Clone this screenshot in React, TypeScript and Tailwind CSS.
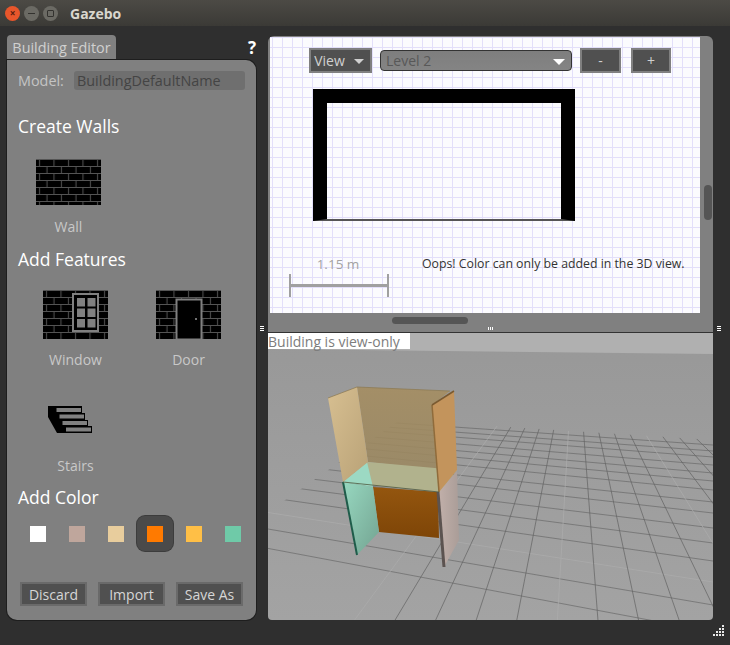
const font = "font-['Open_Sans','Noto_Sans',sans-serif]";

const swatches = ["#ffffff", "#bfa69c", "#e8cd9d", "#ff7a00", "#ffbf46", "#6fcaa8"];

function Bricks({ id, w, h }: { id: string; w: number; h: number }) {
  return (
    <>
      <defs>
        <pattern id={id} width="14.5" height="14" patternUnits="userSpaceOnUse">
          <rect width="14.5" height="14" fill="#000" />
          <path d="M0 .5H14.5M0 7.5H14.5M3.5 0V7M11 7V14" stroke="#777" strokeWidth="1" opacity=".7" />
        </pattern>
      </defs>
      <rect width={w} height={h} fill={`url(#${id})`} />
    </>
  );
}

function WallIcon() {
  return (
    <svg width="65" height="46" viewBox="0 0 65 46">
      <Bricks id="wall-b" w={65} h={46} />
    </svg>
  );
}

function WindowIcon() {
  return (
    <svg width="65" height="49" viewBox="0 0 65 49">
      <Bricks id="win-b" w={65} h={49} />
      <rect x="30" y="4" width="25" height="37" fill="#000" stroke="#808080" strokeWidth="2" />
      {[0, 1, 2].map((r) =>
        [0, 1].map((c) => (
          <rect key={`${r}${c}`} x={34 + c * 10.5} y={8 + r * 10.5} width="8" height="8.5" fill="#808080" />
        )),
      )}
    </svg>
  );
}

function DoorIcon() {
  return (
    <svg width="65" height="49" viewBox="0 0 65 49">
      <Bricks id="door-b" w={65} h={49} />
      <rect x="20.5" y="9.5" width="25" height="40" fill="#000" stroke="#808080" strokeWidth="2" />
      <circle cx="40" cy="29" r="1" fill="#999" />
    </svg>
  );
}

function StairsIcon() {
  return (
    <svg className="-ml-[9px]" width="46" height="29" viewBox="0 0 46 29">
      <path d="M0 1H34V8H37V15H40V21H44V28H9L0 12Z" fill="#000" />
      <path d="M8.5 3H33V7H8.5ZM11.5 9.5H36V13.5H11.5ZM14.5 16H39V20H14.5ZM18 22.5H43V26.5H18Z" fill="#808080" />
    </svg>
  );
}

const columnStarts = Array.from({ length: 17 }, (_, i) => -202 + i * 40.3 + 558);
const rowEnds = [445, 451, 457, 465, 473, 481, 490, 502, 513, 528, 543, 561, 582, 605, 632];

function rowY(yr: number, x: number) {
  return 335 + ((yr - 335) * (x + 868)) / 1581;
}

function Scene() {
  return (
    <svg className="block h-full w-full" viewBox="268 333 445 287" preserveAspectRatio="none">
      <defs>
        <linearGradient id="ground" x1="0" y1="0" x2="0" y2="1">
          <stop offset="0" stopColor="#989898" />
          <stop offset="1" stopColor="#a3a3a3" />
        </linearGradient>
        <linearGradient id="teal" x1="0" y1="0" x2="1" y2="1">
          <stop offset="0" stopColor="#97d8c0" />
          <stop offset="1" stopColor="#73a391" />
        </linearGradient>
        <linearGradient id="rust" x1="0" y1="0" x2="0" y2="1">
          <stop offset="0" stopColor="#94560f" />
          <stop offset="1" stopColor="#7e4507" />
        </linearGradient>
        <linearGradient id="pink" x1="0" y1="0" x2="1" y2="0">
          <stop offset="0" stopColor="#c2b0aa" />
          <stop offset="1" stopColor="#aa9d98" />
        </linearGradient>
        <linearGradient id="tan" x1="0" y1="0" x2="1" y2="1">
          <stop offset="0" stopColor="#d7bf91" />
          <stop offset="1" stopColor="#b9a277" />
        </linearGradient>
        <linearGradient id="back" x1="0" y1="0" x2="0" y2="1">
          <stop offset="0" stopColor="#a58d60" />
          <stop offset="1" stopColor="#9a8760" />
        </linearGradient>
        <clipPath id="grid-clip">
          <path d="M268 512L400 420L713 440V620H268Z" />
        </clipPath>
      </defs>
      <rect x="268" y="333" width="445" height="287" fill="url(#ground)" />
      <path d="M268 333H713V354L268 349Z" fill="#b0b0b0" />
      <g clipPath="url(#grid-clip)" fill="none" strokeWidth="1">
        {rowEnds.map((yr, i) => (
          <line
            key={yr}
            x1="268"
            y1={rowY(yr, 268)}
            x2="713"
            y2={yr}
            stroke={i === 12 ? "#adadad" : "#6a6a6a"}
            opacity=".7"
          />
        ))}
        {columnStarts.map((x, i) => {
          const y0 = 320;
          const x0 = 575;
          const top = x0 + ((x - x0) * (400 - y0)) / (618 - y0);
          return (
            <line
              key={x}
              x1={top}
              y1="400"
              x2={x + ((x - x0) * 2) / (618 - y0)}
              y2="620"
              stroke={i === 0 || i === 5 || i === 10 ? "#adadad" : "#626262"}
              opacity=".7"
            />
          );
        })}
      </g>
      <path d="M357 387L450 391L432 405L438 470L368 462Z" fill="url(#back)" opacity=".88" />
      <path d="M373 487L438 492L439 538L379 532Z" fill="url(#rust)" />
      <path d="M343 482L373 487L379 532L357 555Z" fill="url(#teal)" />
      <path d="M343 482L357 555" stroke="#1f5c4a" strokeWidth="2" />
      <path d="M438 492L457 471L459 540L444 567Z" fill="url(#pink)" />
      <path d="M438 492L444 567" stroke="#5c5350" strokeWidth="3" />
      <path d="M343 482L368 462L457 470L439 492Z" fill="#b1b28d" />
      <path d="M343 482L367 462L373 487Z" fill="#9cd9c3" />
      <path d="M328 398L357 387L368 462L343 482Z" fill="url(#tan)" />
      <path d="M432 405L454 391L457 470L439 492Z" fill="#c3945c" />
      <path d="M432 405L439 492" stroke="#8f6b3b" strokeWidth="1.5" />
      <path d="M328 398L357 387L450 391" stroke="#8a7750" fill="none" opacity=".7" />
      <path d="M432 405L454 391" stroke="#7a5a30" strokeWidth="1.5" />
      <path d="M343 482L439 492" stroke="#4f5a40" opacity=".8" />
    </svg>
  );
}

function ToolButton({ children, className }: { children: React.ReactNode; className: string }) {
  return (
    <div
      className={`flex h-[25px] items-center justify-center border-2 border-[#808080] bg-[#505050] text-[14px] text-[#d0d0d0] ${className}`}
    >
      {children}
    </div>
  );
}

function PanelButton({ label }: { label: string }) {
  return (
    <div className="flex h-[24px] w-[67px] items-center justify-center border-2 border-[#6a6a6a] bg-[#505050] text-[14px] text-[#d6d6d6]">
      {label}
    </div>
  );
}

function Tool({ label, className, children }: { label: string; className: string; children: React.ReactNode }) {
  return (
    <div className={`flex flex-col items-center text-[14px] text-[#c8c8c8] ${className}`}>
      {children}
      <span>{label}</span>
    </div>
  );
}

function LeftPanel() {
  return (
    <div className="flex w-[249px] shrink-0 flex-col">
      <div className="flex h-[25px] items-start justify-between">
        <div className="flex h-[25px] w-[109px] items-center justify-center rounded-t-[4px] bg-[#808080] text-[14.4px] text-[#d0d0d0]">
          Building Editor
        </div>
        <span className="mt-[2px] text-[17px] leading-[22px] font-bold text-white">?</span>
      </div>
      <div className="flex h-[560px] flex-col rounded-[10px] rounded-tl-none bg-[#808080] px-[11px] pt-[11px] shadow-[0_0_0_1px_#1e1e1e]">
        <div className="flex h-[19px] items-center text-[14.4px]">
          <span className="w-[56px] text-[#c4c4c4]">Model:</span>
          <div className="flex h-[19px] w-[171px] items-center rounded-[3px] bg-[#6f6f6f] pl-[3px] text-[#444]">
            BuildingDefaultName
          </div>
        </div>
        <h2 className="mt-[24px] h-[24px] text-[17.5px] leading-[24px] text-white">Create Walls</h2>
        <Tool label="Wall" className="mt-[21px] w-[101px] gap-[11px]">
          <WallIcon />
        </Tool>
        <h2 className="mt-[10px] h-[24px] text-[17.5px] leading-[24px] text-white">Add Features</h2>
        <div className="mt-[19px] flex">
          <Tool label="Window" className="ml-[25px] w-[65px] gap-[10px]">
            <WindowIcon />
          </Tool>
          <Tool label="Door" className="ml-[48px] w-[65px] gap-[10px]">
            <DoorIcon />
          </Tool>
        </div>
        <Tool label="Stairs" className="mt-[35px] ml-[25px] w-[65px] gap-[21px]">
          <StairsIcon />
        </Tool>
        <h2 className="mt-[9px] h-[24px] text-[17.5px] leading-[24px] text-white">Add Color</h2>
        <div className="mt-[7px] flex h-[35px] items-center">
          {swatches.map((c, i) => (
            <div key={c} className="flex h-[35px] w-[39px] shrink-0 items-center justify-center">
              <div
                className={`flex h-[35px] w-[36px] items-center justify-center ${i === 3 ? "rounded-[8px] bg-[#4a4a4a] shadow-[0_0_0_1px_#3c3c3c]" : ""}`}
              >
                <div className="h-[16px] w-[16px]" style={{ backgroundColor: c }} />
              </div>
            </div>
          ))}
        </div>
        <div className="mt-[31px] ml-[2px] flex gap-[11px]">
          <PanelButton label="Discard" />
          <PanelButton label="Import" />
          <PanelButton label="Save As" />
        </div>
      </div>
    </div>
  );
}

function Canvas() {
  return (
    <div className="relative h-[276px] w-[430px] bg-[#fbfbfe] bg-[linear-gradient(to_right,#e3dffa_1px,transparent_1px),linear-gradient(to_bottom,#e3dffa_1px,transparent_1px)] bg-[size:10px_10px] bg-[position:2px_0px]">
      <div className="absolute top-[11px] left-[39px] flex items-start">
        <ToolButton className="w-[63px] gap-[9px] pr-[3px]">
          <span>View</span>
          <span className="mt-[2px] h-0 w-0 border-x-[5px] border-t-[5px] border-x-transparent border-t-[#d0d0d0]" />
        </ToolButton>
        <div className="mt-[2px] ml-[8px] flex h-[21px] w-[192px] items-center justify-between rounded-[4px] border border-[#333] bg-[linear-gradient(to_bottom,#7e7e7e,#848484)] pr-[6px] pl-[5px] text-[14px] text-[#585858]">
          <span>Level 2</span>
          <span className="mt-[2px] h-0 w-0 border-x-[6px] border-t-[6px] border-x-transparent border-t-white" />
        </div>
        <ToolButton className="ml-[8px] w-[41px]">-</ToolButton>
        <ToolButton className="ml-[10px] w-[40px]">+</ToolButton>
      </div>
      <div className="absolute top-[52px] left-[43px] h-[132px] w-[262px] border-x-[14px] border-t-[14px] border-b-2 border-x-black border-t-black border-b-[#555]" />
      <div className="absolute top-[217px] left-[18px] w-[100px] text-center text-[13.5px] leading-[20px] text-[#a3a3a3]">
        1.15 m
      </div>
      <div className="absolute top-[237px] left-[19px] flex h-[23px] w-[100px] items-center border-x-2 border-[#a0a0a0]">
        <div className="h-[3px] w-full bg-[#a0a0a0]" />
      </div>
      <div className="absolute top-[217px] left-[152px] text-[12.3px] leading-[20px] whitespace-nowrap text-[#333]">
        Oops! Color can only be added in the 3D view.
      </div>
    </div>
  );
}

function RightPanel() {
  return (
    <div className="relative ml-[12px] flex w-[445px] shrink-0 flex-col pt-[1px]">
      <div className="flex h-[296px] flex-col rounded-t-[6px] bg-[#808080] pt-[1px]">
        <div className="flex h-[276px] pl-[2px]">
          <Canvas />
          <div className="flex flex-1 justify-center pt-[148px] pl-[2px]">
            <div className="h-[35px] w-[8px] rounded-full bg-[#555]" />
          </div>
        </div>
        <div className="pt-[4px] pl-[124px]">
          <div className="h-[7px] w-[76px] rounded-full bg-[#555]" />
        </div>
        <div className="mt-[3px] flex justify-center gap-px">
          <i className="h-[3px] w-px bg-white" />
          <i className="h-[3px] w-px bg-white" />
          <i className="h-[3px] w-px bg-white" />
        </div>
      </div>
      <div className="h-px bg-[#333]" />
      <div className="relative h-[287px] overflow-hidden rounded-b-[4px]">
        <Scene />
        <div className="absolute top-0 left-0 flex h-[16px] w-[142px] items-center bg-white text-[14px] whitespace-nowrap text-[#7d7d7d]">
          Building is view-only
        </div>
      </div>
    </div>
  );
}

function GripDots({ className }: { className: string }) {
  return (
    <div className={`absolute flex flex-col gap-px ${className}`}>
      <i className="h-px w-[4px] bg-white" />
      <i className="h-px w-[4px] bg-white" />
      <i className="h-px w-[4px] bg-white" />
    </div>
  );
}

export default function App() {
  return (
    <div className={`relative h-[645px] w-[730px] overflow-hidden bg-[#2f2f2f] ${font}`}>
      <header className="flex h-[26px] items-center bg-[linear-gradient(to_bottom,#4c4a45,#3b3a36)] pl-[5px]">
        <div className="flex h-[15px] w-[15px] items-center justify-center rounded-full bg-[#e8562b] text-[10px] leading-none font-bold text-[#5a2010]">
          ×
        </div>
        <div className="ml-[4px] flex h-[15px] w-[15px] items-center justify-center rounded-full bg-[#6b6a64]">
          <i className="h-px w-[7px] bg-[#33322f]" />
        </div>
        <div className="ml-[4px] flex h-[15px] w-[15px] items-center justify-center rounded-full bg-[#6b6a64]">
          <i className="h-[7px] w-[7px] rounded-[1px] border border-[#33322f]" />
        </div>
        <span className="ml-[12px] text-[14px] font-bold text-[#d9d6cd]">Gazebo</span>
      </header>
      <main className="flex pt-[9px] pl-[7px]">
        <LeftPanel />
        <RightPanel />
      </main>
      <GripDots className="top-[326px] left-[260px]" />
      <GripDots className="top-[326px] left-[717px]" />
      <svg className="absolute top-[625px] left-[712px]" width="12" height="12" viewBox="0 0 12 12" fill="#e8e8e8">
        <path d="M10 0h2v2h-2zM7 3h2v2H7zM10 3h2v2h-2zM4 6h2v2H4zM7 6h2v2H7zM10 6h2v2h-2zM1 9h2v2H1zM4 9h2v2H4zM7 9h2v2H7zM10 9h2v2h-2z" />
      </svg>
    </div>
  );
}
